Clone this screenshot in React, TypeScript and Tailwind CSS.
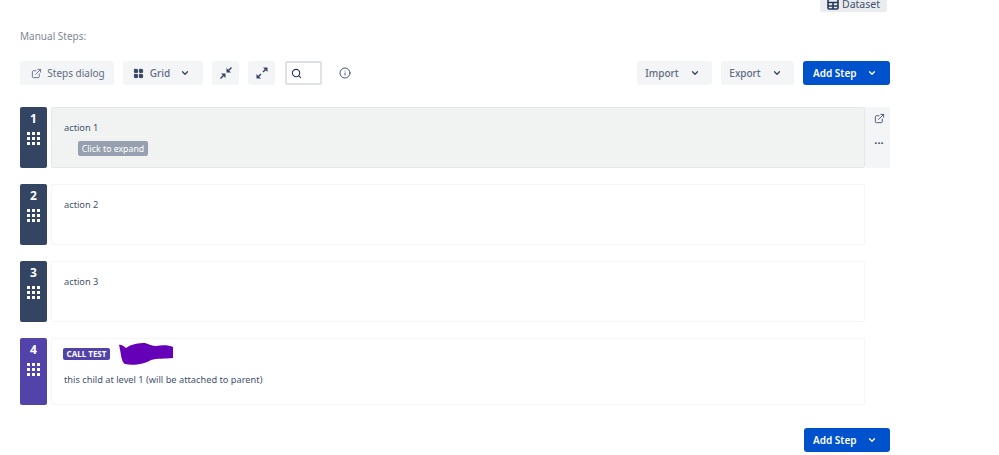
import { ChevronDown, ExternalLink, Info, LayoutGrid, Search } from 'lucide-react';
import type { ReactNode } from 'react';

const font = 'font-["Noto_Sans",sans-serif]';

function ToolButton({ children, className = '' }: { children: ReactNode; className?: string }) {
  return (
    <div className={`h-[24px] flex items-center justify-center rounded-[3px] bg-[#f4f5f7] text-[10px] text-[#5e6c84] ${className}`}>
      {children}
    </div>
  );
}

function AddStep({ className = 'w-[87px] pl-[10px]' }: { className?: string }) {
  return (
    <div className={`h-[24px] flex items-center rounded-[3px] bg-[#0052cc] text-[10px] font-semibold text-white ${className}`}>
      Add Step
      <ChevronDown className="w-[10px] h-[10px] ml-[10px]" strokeWidth={3.2} />
    </div>
  );
}

function GripDots() {
  return (
    <div className="grid grid-cols-3 gap-[2px] w-[13px]">
      {Array.from({ length: 9 }).map((_, i) => (
        <div key={i} className="w-[3px] h-[3px] bg-white" />
      ))}
    </div>
  );
}

function Collapse() {
  return (
    <svg width="14" height="14" viewBox="0 0 14 14" fill="none" stroke="#344563" strokeWidth="1.5">
      <path d="M1.5 12.5 L4.5 9.5" />
      <path d="M2 7.5 H6.5 V12 Z" fill="#344563" stroke="none" />
      <path d="M12.5 1.5 L9.5 4.5" />
      <path d="M7.5 2 V6.5 H12 Z" fill="#344563" stroke="none" />
    </svg>
  );
}

function Expand() {
  return (
    <svg width="14" height="14" viewBox="0 0 14 14" fill="none" stroke="#344563" strokeWidth="1.5">
      <path d="M3 11 L6 8" />
      <path d="M1.5 8 V12.5 H6 Z" fill="#344563" stroke="none" />
      <path d="M11 3 L8 6" />
      <path d="M8 1.5 H12.5 V6 Z" fill="#344563" stroke="none" />
    </svg>
  );
}

function DatasetIcon() {
  return (
    <svg width="12" height="12" viewBox="0 0 12 12" fill="none" stroke="#253858" strokeWidth="1.6" className="mr-[3px] mb-[1px]">
      <rect x="1" y="1" width="10" height="10" rx="1" />
      <path d="M1 4.5 H11 M1 8 H11 M6 4.5 V11" />
    </svg>
  );
}

function Step({ n, height, purple, active, children }: { n: number; height: string; purple?: boolean; active?: boolean; children: ReactNode }) {
  return (
    <div className={`flex w-[870px] ${height}`}>
      <div className={`w-[27px] shrink-0 flex flex-col items-center rounded-[2px] pt-[4px] text-white ${purple ? 'bg-[#5243aa]' : 'bg-[#344563]'}`}>
        <span className="text-[12px] leading-[16px] font-bold mb-[5px]">{n}</span>
        <GripDots />
      </div>
      <div className={`ml-[4px] flex-1 rounded-[2px] border pl-[12px] pt-[12px] text-[9.25px] leading-[16px] text-[#42526e] ${active ? 'bg-[#f1f2f2] border-[#e6e7e9]' : 'bg-white border-[#f5f6f7]'}`}>
        {children}
      </div>
      {active ? (
        <div className="w-[25px] shrink-0 bg-[#f4f5f7] flex flex-col items-center pt-[6px] pl-[3px] text-[#42526e]">
          <ExternalLink className="w-[11px] h-[11px]" strokeWidth={2} />
          <span className="mt-[9px] text-[11px] leading-[14px] font-bold">...</span>
        </div>
      ) : (
        <div className="w-[25px] shrink-0" />
      )}
    </div>
  );
}

export default function App() {
  return (
    <div className={`${font} w-[999px] h-[455px] overflow-hidden bg-white pl-[20px] relative`}>
      <div className="w-[870px] h-[12px] flex justify-end pr-[3px]">
        <div className="w-[67px] h-[12px] flex items-end justify-center overflow-hidden rounded-b-[2px] bg-[#ebecf0] text-[10.5px] leading-[14px] text-[#42526e]">
          <div className="flex items-center mb-[1px] shrink-0">
            <DatasetIcon />
            Dataset
          </div>
        </div>
      </div>
      <div className="mt-[17px] text-[10px] leading-[14px] text-[#808896]">Manual Steps:</div>

      <div className="mt-[18px] w-[870px] flex items-center">
        <ToolButton className="w-[94px] pl-[2px]">
          <ExternalLink className="w-[11px] h-[11px] mr-[5px]" strokeWidth={2} />
          Steps dialog
        </ToolButton>
        <ToolButton className="w-[80px] ml-[9px] pr-[3px]">
          <LayoutGrid className="w-[11px] h-[11px] mr-[6px] text-[#344563] fill-[#344563]" />
          <span className="font-medium">Grid</span>
          <ChevronDown className="w-[10px] h-[10px] ml-[10px] text-[#344563]" strokeWidth={3.2} />
        </ToolButton>
        <ToolButton className="w-[27px] ml-[9px]"><Collapse /></ToolButton>
        <ToolButton className="w-[27px] ml-[9px]"><Expand /></ToolButton>
        <div className="ml-[10px] w-[37px] h-[24px] flex items-center rounded-[2px] border-2 border-[#dfe1e6] pl-[4px]">
          <Search className="w-[11px] h-[11px] text-[#253858]" strokeWidth={2.4} />
        </div>
        <Info className="ml-[17px] w-[12px] h-[12px] text-[#344563]" strokeWidth={1.8} />
        <ToolButton className="w-[75px] ml-auto pr-[4px]">
          <span className="font-medium">Import</span>
          <ChevronDown className="w-[10px] h-[10px] ml-[11px] text-[#344563]" strokeWidth={3.2} />
        </ToolButton>
        <ToolButton className="w-[73px] ml-[9px] pr-[4px]">
          <span className="font-medium">Export</span>
          <ChevronDown className="w-[10px] h-[10px] ml-[11px] text-[#344563]" strokeWidth={3.2} />
        </ToolButton>
        <div className="ml-[9px]"><AddStep /></div>
      </div>

      <div className="mt-[22px] flex flex-col gap-[16px]">
        <Step n={1} height="h-[61px]" active>
          action 1
          <div className="ml-[14px] mt-[5px] w-[70px] h-[15px] flex items-center justify-center rounded-[2px] bg-[#97a0af] text-[8.75px] text-white">
            Click to expand
          </div>
        </Step>
        <Step n={2} height="h-[61px]">action 2</Step>
        <Step n={3} height="h-[61px]">action 3</Step>
        <Step n={4} height="h-[67px]" purple>
          <div className="flex items-center h-[12px] -mt-[3px] -ml-[1px]">
            <span className="h-[12px] w-[47px] flex items-center justify-center rounded-[2px] bg-[#5243aa] text-[8px] font-bold text-white shrink-0">CALL TEST</span>
            <svg className="ml-[9px] shrink-0" width="55" height="22" viewBox="0 0 55 22">
              <path d="M0 2 C3 1 5 4 7 5 C12 1 20 0 26 0 C30 1 33 3 37 3 C43 2 50 2 54 4 L54 15 C46 16 38 15 32 17 C26 21 14 23 6 21 C2 19 2 9 0 2 Z" fill="#6600b8" />
            </svg>
          </div>
          <div className="mt-[12px]">this child at level 1 (will be attached to parent)</div>
        </Step>
      </div>

      <div className="mt-[23px] w-[870px] flex justify-end">
        <AddStep className="w-[86px] pl-[9px]" />
      </div>
    </div>
  );
}
